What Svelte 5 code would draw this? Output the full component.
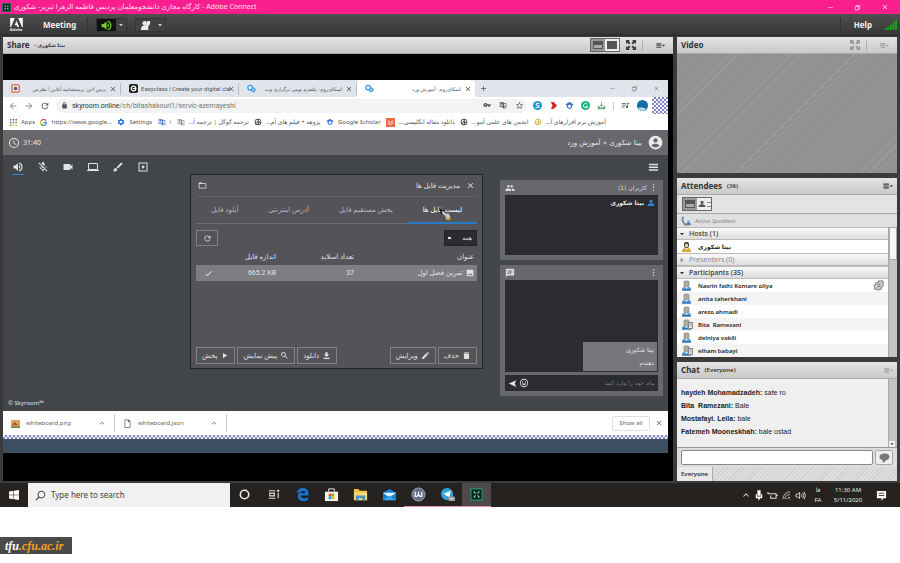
<script lang="ts">
  type Person = { name: string; badge?: boolean; hand?: boolean };

  // 24x24 single-colour glyphs
  const paths: { [name: string]: string } = {
    close: 'M19 6.4 17.6 5 12 10.6 6.4 5 5 6.4 10.6 12 5 17.6 6.4 19 12 13.4 17.6 19 19 17.6 13.4 12z',
    min: 'M4 11h16v2H4z',
    restore: 'M7 3h14v14h-4v4H3V7h4zm2 2v2h8v8h2V5zM5 9v10h10V9z',
    plus: 'M19 13h-6v6h-2v-6H5v-2h6V5h2v6h6z',
    back: 'M20 11H7.8l5.6-5.6L12 4l-8 8 8 8 1.4-1.4L7.8 13H20z',
    forward: 'M12 4l-1.4 1.4 5.6 5.6H4v2h12.2l-5.6 5.6L12 20l8-8z',
    refresh: 'M17.6 6.4A8 8 0 1 0 19.7 14h-2.1A6 6 0 1 1 12 6c1.7 0 3.1.7 4.2 1.8L13 11h7V4z',
    lock: 'M18 8h-1V6A5 5 0 0 0 7 6v2H6a2 2 0 0 0-2 2v10c0 1.1.9 2 2 2h12a2 2 0 0 0 2-2V10a2 2 0 0 0-2-2zM9 6a3 3 0 0 1 6 0v2H9z',
    key: 'M12.6 10A6 6 0 1 0 12.6 14H16v4h4v-4h3v-4zM7 14a2 2 0 1 1 0-4 2 2 0 0 1 0 4z',
    star: 'M22 9.2l-7.2-.6L12 2 9.2 8.6 2 9.2l5.5 4.7L5.8 21 12 17.3 18.2 21l-1.6-7.1zM12 15.4l-3.8 2.3 1-4.3-3.3-2.9 4.4-.4L12 6.1l1.7 4 4.4.4-3.3 2.9 1 4.3z',
    gear: 'M19.4 13a7.500 7.500 0 0 0 0-2l2.300-1.700-2.200-3.800-2.600 1a7 7 0 0 0-1.700-1L14.800 2h-5.600l-.4 3.500a7 7 0 0 0-1.700 1l-2.600-1-2.200 3.800L4.600 11a7.500 7.500 0 0 0 0 2l-2.300 1.700 2.200 3.800 2.600-1c.5.4 1.100.8 1.700 1l.4 3.500h5.600l.4-3.500c.6-.2 1.200-.6 1.700-1l2.600 1 2.200-3.800zM12 16a4 4 0 1 1 0-8 4 4 0 0 1 0 8z',
    translate: 'M2 3h11l1 4h8v15H11l-1-4H2zm2 2v11h8L9.500 5zm10.600 4 2.900 9.500-3 2H20V9zM5 7h5v2H8v5H6V9H5z',
    globe: 'M12 2a10 10 0 1 0 0 20 10 10 0 0 0 0-20zM5 8l4-3 3 1-1 3-3 1 1 3 3 1-1 5-3-2-1-4-3-3zm10-3 3 2 2 4-3 1-3-3zm1 9 3 1-3 4-2-1z',
    cap: 'M12 2 1 9l4 3v5l7 5 7-5v-5l4-3zM12 18a4 4 0 1 1 0-8 4 4 0 0 1 0 8z',
    clock: 'M12 2a10 10 0 1 0 0 20 10 10 0 0 0 0-20zm0 18a8 8 0 1 1 0-16 8 8 0 0 1 0 16zm.5-13H11v6l5.200 3.200.8-1.300-4.500-2.700z',
    account: 'M12 1a11 11 0 1 0 0 22 11 11 0 0 0 0-22zm0 4a3.500 3.500 0 1 1 0 7 3.500 3.500 0 0 1 0-7zm0 15a8 8 0 0 1-6.500-3.300C6 14.800 10 14 12 14s6 .8 6.500 2.700A8 8 0 0 1 12 20z',
    volume: 'M3 9v6h4l5 5V4L7 9zm13.500 3A4.500 4.500 0 0 0 14 8v8a4.500 4.500 0 0 0 2.500-4zM14 3.200v2.100a7 7 0 0 1 0 13.400v2.100a9 9 0 0 0 0-17.600z',
    micoff: 'M19 11h-1.700c0 .7-.2 1.400-.4 2l1.200 1.300c.6-1 .9-2.100.9-3.300zm-4 .2V5a3 3 0 0 0-6 0v.2zM4.300 3 3 4.300l6 6V11a3 3 0 0 0 3.700 2.900l1.600 1.700A5.300 5.300 0 0 1 6.700 11H5a7 7 0 0 0 6 6.700V21h2v-3.300c.9-.1 1.800-.4 2.500-.9l4.200 4.200 1.300-1.300z',
    camera: 'M17 10.500V7a1 1 0 0 0-1-1H4a1 1 0 0 0-1 1v10c0 .6.400 1 1 1h12a1 1 0 0 0 1-1v-3.500l4 4v-11z',
    laptop: 'M20 18a2 2 0 0 0 2-2V6a2 2 0 0 0-2-2H4a2 2 0 0 0-2 2v10c0 1.100.9 2 2 2H0v2h24v-2zM4 6h16v10H4z',
    brush: 'M7 14a3 3 0 0 0-3 3c0 1.300-1.200 2-2 2 .9 1.200 2.500 2 4 2a4 4 0 0 0 4-4 3 3 0 0 0-3-3zM20.700 4.600l-1.300-1.300a1 1 0 0 0-1.400 0L9 12.300l2.700 2.700 9-9a1 1 0 0 0 0-1.400z',
    play: 'M8 5v14l11-7z',
    playbox: 'M3 3h18v18H3zm2 2v14h14V5zm5 3 6 4-6 4z',
    menu: 'M2 19h20v-3H2zm0-6h20v-3H2zm0-9v3h20V4z',
    dots: 'M12 7a2 2 0 1 0 0-4 2 2 0 0 0 0 4zm0 3a2 2 0 1 0 0 4 2 2 0 0 0 0-4zm0 7a2 2 0 1 0 0 4 2 2 0 0 0 0-4z',
    group: 'M16 11a3 3 0 1 0 0-6 3 3 0 0 0 0 6zm-8 0a3 3 0 1 0 0-6 3 3 0 0 0 0 6zm0 2c-2.300 0-7 1.200-7 3.500V19h14v-2.500c0-2.300-4.700-3.500-7-3.500zm8 0h-1c1.200.8 2 2 2 3.500V19h6v-2.500c0-2.300-4.700-3.500-7-3.500z',
    person: 'M12 12a5 5 0 1 0 0-10 5 5 0 0 0 0 10zm0 1c-3 0-10 2-10 5v3h20v-3c0-3-7-5-10-5z',
    message: 'M20 2H4a2 2 0 0 0-2 2v18l4-4h14a2 2 0 0 0 2-2V4a2 2 0 0 0-2-2zM6 9h12v2H6zm8 5H6v-2h8zm4-6H6V6h12z',
    send: 'M22 3 2 12l20 9-4-9z',
    smile: 'M12 2a10 10 0 1 0 0 20 10 10 0 0 0 0-20zm0 18a8 8 0 1 1 0-16 8 8 0 0 1 0 16zM8.500 11a1.500 1.500 0 1 0 0-3 1.500 1.500 0 0 0 0 3zm7 0a1.500 1.500 0 1 0 0-3 1.500 1.500 0 0 0 0 3zM6.500 13a5.800 5.800 0 0 0 11 0z',
    folder: 'M20 6h-8l-2-2H4a2 2 0 0 0-2 2v12c0 1.100.9 2 2 2h16a2 2 0 0 0 2-2V8a2 2 0 0 0-2-2zm0 12H4V8h16z',
    check: 'M9 16.200 4.800 12l-1.400 1.400L9 19 21 7l-1.400-1.400z',
    image: 'M22 20V4a2 2 0 0 0-2-2H4a2 2 0 0 0-2 2v16c0 1.100.9 2 2 2h16a2 2 0 0 0 2-2zM8 13l3 4 4-5 5 7H4z',
    search: 'M15.500 14h-.8l-.3-.3a6.500 6.500 0 1 0-.7.7l.3.300v.8l5 5 1.500-1.500zm-6 0a4.500 4.500 0 1 1 0-9 4.500 4.500 0 0 1 0 9z',
    download: 'M19 9h-4V3H9v6H5l7 7zM4 18v3h16v-3z',
    pencil: 'M3 17.200V21h3.800L17.800 10l-3.800-3.800zM20.700 7a1 1 0 0 0 0-1.400l-2.300-2.300a1 1 0 0 0-1.400 0l-1.800 1.800L19 8.900z',
    trash: 'M5 19c0 1.100.9 2 2 2h10a2 2 0 0 0 2-2V7H5zM19 4h-4l-1-1h-4L9 4H5v2h14z',
    up: 'M12 8l-7 7 1.400 1.400L12 10.800l5.600 5.600L19 15z',
    down: 'M6 9h12l-6 7z',
    right: 'M8 5v14l9-7z',
    expand: 'M2 2h8L7.500 4.500 11 8 8 11 4.500 7.500 2 10zm12 0h8v8l-2.500-2.500L16 11l-3-3 3.500-3.500zM8 13l3 3-3.500 3.500L10 22H2v-8l2.500 2.500zm8 0 3.500 3.500L22 14v8h-8l2.500-2.500L13 16z',
    list: 'M1 6h13v3H1zm0 5h13v2H1zm0 4h13v3H1zM16 10h8l-4 5z',
    file: 'M4 1h11l5 5v17H4zm2 2v18h12V8h-5V3z',
    queue: 'M2 5h12v2H2zm0 5h12v2H2zm0 5h8v2H2zM17 5h5v3h-3v8a3 3 0 1 1-2-3z',
    inbox: 'M11 2h2v8h4l-5 5-5-5h4zM2 13h4l2 4h8l2-4h4v9H2z',
    speech: 'M12 3C5 3 1 6 1 11c0 4 3 6 7 7 1 2 0 4-2 5 5 0 8-2 9-5 5-1 8-4 8-8 0-5-5-7-11-7z'
  };

  const browserTabs = [
    { title: 'پرس لاین: پرسشنامه آنلاین | نظرس', icon: 'survey', fa: true, active: false },
    { title: 'Easyclass | Create your digital cla', icon: 'easy', fa: false, active: false },
    { title: 'اسکای‌روم - پلتفرم بومی برگزاری وب', icon: 'sky', fa: true, active: false },
    { title: 'اسکای‌روم - آموزش ورد', icon: 'sky', fa: true, active: true }
  ];

  const bookmarks = [
    { label: 'https://www.google...', icon: 'g', color: '#4285f4' },
    { label: 'Settings', icon: 'gear', color: '#1a73e8' },
    { label: 'i', icon: 'translate', color: '#4a7fd8' },
    { label: 'ترجمه گوگل | ترجمه آ...', icon: 'translate', color: '#8a8d91' },
    { label: 'پژوهه + فیلم های آم...', icon: 'globe', color: '#4b4d50' },
    { label: 'Google Scholar', icon: 'cap', color: '#4374d9' },
    { label: 'دانلود مقاله انگلیسی...', icon: 'mail', color: '#ee6a45' },
    { label: 'انجمن های علمی آمو...', icon: 'globe', color: '#4b4d50' },
    { label: 'آموزش نرم افزارهای آ...', icon: 'globe', color: '#e3b56c' }
  ];

  const tools = [
    { icon: 'volume', label: 'Speaker', on: true },
    { icon: 'micoff', label: 'Microphone', on: false },
    { icon: 'camera', label: 'Webcam', on: false },
    { icon: 'laptop', label: 'Screen', on: false },
    { icon: 'brush', label: 'Whiteboard', on: false },
    { icon: 'playbox', label: 'Player', on: false }
  ];

  const fileTabs = ['لیست فایل ها', 'پخش مستقیم فایل', 'آدرس اینترنتی', 'آپلود فایل'];
  let fileTab = $state(0);

  const participants: Person[] = [
    { name: 'Nasrin fathi Komare oliya', hand: true },
    { name: 'anita taherkhani' },
    { name: 'arezo ahmadi' },
    { name: 'Bita  Ramezani', badge: true },
    { name: 'delniya vakili' },
    { name: 'elham babayi', badge: true }
  ];

  const messages = [
    { from: 'haydeh Mohamadzadeh', text: 'safe ro' },
    { from: 'Bita  Ramezani', text: 'Bale' },
    { from: 'Mostafayi. Leila', text: 'bale' },
    { from: 'Fatemeh Mooneskhah', text: 'bale ostad' }
  ];

  const taskApps = ['cortana', 'tasks', 'edge', 'store', 'explorer', 'mail', 'wapp', 'telegram', 'connect'];
</script>

{#snippet icon(name: string, size: number)}
  <svg class="icon" viewBox="0 0 24 24" width={size} height={size} aria-hidden="true"><path d={paths[name]} /></svg>
{/snippet}

{#snippet avatar(host: boolean, badge: boolean)}
  <svg class="icon" viewBox="0 0 12 12" width="12" height="12" aria-hidden="true">
    {#if host}
      <rect x="3" y="1" width="5" height="6" rx="2" fill="#4b4334" />
      <rect x="4" y="3" width="3" height="3" fill="#e2cda2" />
      <path d="M1 11V9l2-2h5l2 2v2z" fill="#d9ab3c" />
    {:else}
      <rect x="3" y="1" width="5" height="6" rx="1" fill="#b3ac95" stroke="#7f8791" stroke-width=".7" />
      <path d="M1 11V8l2-1h5l2 1v3z" fill="#5c97d2" />
      <path d="M2 9.500h7" stroke="#3c73ad" />
    {/if}
    <path d="M4 7h3l-1.500 2z" fill="#e8eef5" />
    {#if badge}
      <rect x="7.500" y="3.500" width="4" height="6" fill="#eee" stroke="#888" />
      <path d="M8 5h3M8 7h3" stroke="#888" stroke-width=".7" />
    {/if}
  </svg>
{/snippet}

{#snippet appIcon(name: string)}
  <svg viewBox="0 0 16 16" width="15" height="15" aria-hidden="true">
    {#if name === 'cortana'}
      <circle cx="8" cy="8" r="4.500" fill="none" stroke="#eee" stroke-width="1.700" />
    {:else if name === 'tasks'}
      <path d="M3 4h7M3 12h7M4 6.500h5v3H4zM13 6v6" fill="none" stroke="#ddd" stroke-width="1.200" />
      <path d="M12 3h2v2h-2z" fill="#fff" />
    {:else if name === 'edge'}
      <path d="M1.500 7C2.200 3 5 1 8.300 1c4 0 6.200 2.800 6.200 6v2H6c.1 2 1.700 3 4 3 1.500 0 2.800-.4 4-1.100v3c-1.300.8-3 1.100-4.700 1.100C5.300 15 3 12.700 3 9.500 3 7.500 4 6 5.500 5 3.800 5.300 2.500 6 1.500 7zM6 6.600h5C11 5 10 4.100 8.600 4.100 7.200 4.100 6.200 5.200 6 6.600z" fill="#1673d6" />
    {:else if name === 'store'}
      <path d="M1 5h14v10H1z" fill="#f5f5f5" />
      <path d="M5 5V2h6v3" fill="none" stroke="#eee" />
      <path d="M5 7h3v3H5z" fill="#f25022" /><path d="M8 7h3v3H8z" fill="#7fba00" />
      <path d="M5 10h3v3H5z" fill="#00a4ef" /><path d="M8 10h3v3H8z" fill="#ffb900" />
    {:else if name === 'explorer'}
      <path d="M1 2h5l1 2h8v10H1z" fill="#f3c04c" />
      <path d="M1 6h14v8H1z" fill="#fad87c" />
      <path d="M3 9h10v5h-3v-2H6v2H3z" fill="#4296cf" />
    {:else if name === 'mail'}
      <path d="M1 6l7-4 7 4v8H1z" fill="#1683d8" />
      <path d="M1 6h14l-7 5z" fill="#e8f4fd" />
      <path d="M1 14l7-5 7 5z" fill="#3ba4ec" />
    {:else if name === 'wapp'}
      <circle cx="8" cy="8" r="7" fill="#66708a" stroke="#9ba3b6" />
      <path d="M4.500 5v5h2l1.500-2 1.500 2h2V5M8 5v3" fill="none" stroke="#fff" stroke-width="1.300" />
    {:else if name === 'telegram'}
      <circle cx="7.500" cy="7.500" r="6.500" fill="#2fa3dc" />
      <path d="M3 7.500l8.500-3.500-1.500 7-2.500-2-1 1.500-.5-2.500z" fill="#fff" />
      <rect x="9" y="10" width="7" height="5" rx="1" fill="#9d9d9d" />
      <path d="M10.500 12.500h4" stroke="#eee" />
    {:else}
      <path d="M2 2h12v12H2z" fill="#06261f" stroke="#2c8f72" stroke-width="1.200" />
      <path d="M5 5l2 2M11 5L9 7M5 11l2-2M11 11L9 9M5 5h1M11 5h-1M5 11h1M11 11h-1" stroke="#7fd6b5" stroke-width="1.300" />
    {/if}
  </svg>
{/snippet}

{#snippet tabIcon(name: string)}
  <svg class="icon" viewBox="0 0 10 10" width="9" height="9" aria-hidden="true">
    {#if name === 'survey'}
      <rect x="1" y="1" width="8" height="8" rx="1" fill="#fff" stroke="#e0643b" stroke-width="1.500" />
      <circle cx="5" cy="5" r="2.200" fill="#4b6a8b" />
    {:else if name === 'easy'}
      <rect width="10" height="10" rx="2" fill="#222" />
      <circle cx="5" cy="5" r="2.600" fill="none" stroke="#fff" stroke-width="1.300" />
      <path d="M4 5h4" stroke="#fff" />
    {:else}
      <circle cx="3.500" cy="4" r="2.600" fill="#fff" stroke="#3794e3" stroke-width="1.400" />
      <circle cx="7" cy="6.500" r="2.200" fill="#8bc6f4" stroke="#3794e3" />
    {/if}
  </svg>
{/snippet}

<div class="desktop">
  <header class="titlebar">
    <span class="app-mark">{@render icon('expand', 5)}</span>
    <span class="window-title">کارگاه مجازی دانشجومعلمان پردیس فاطمه الزهرا تبریز- شکوری - Adobe Connect</span>
    <div class="window-buttons">
      <button aria-label="Minimize">{@render icon('min', 7)}</button>
      <button aria-label="Restore">{@render icon('restore', 7)}</button>
      <button aria-label="Close">{@render icon('close', 8)}</button>
    </div>
  </header>

  <nav class="menubar">
    <span class="adobe">
      <svg viewBox="0 0 14 10" width="13" height="9" aria-hidden="true">
        <path d="M0 0h5L1 10H0zM9 0h5v10h-1zM7 3l3 7H8L7 8H5z" fill="#fff" />
      </svg>
      <small>Adobe</small>
    </span>
    <button class="menu-item">Meeting</button>
    <span class="menu-line"></span>
    <div class="toggle">
      <button class="speaker" aria-label="Speakers">{@render icon('volume', 13)}</button>
      <button class="caret" aria-label="Speaker options">{@render icon('down', 8)}</button>
    </div>
    <div class="toggle">
      <button class="raise" aria-label="Raise hand">
        <svg class="icon" viewBox="0 0 12 12" width="11" height="11" aria-hidden="true">
          <circle cx="5" cy="3.500" r="2.300" /><path d="M1 11c0-3 1-5 4-5l2-1V2l2-1h2v3L9 7v4z" />
        </svg>
      </button>
      <button class="caret" aria-label="Status options">{@render icon('down', 8)}</button>
    </div>
    <span class="menu-line push"></span>
    <button class="menu-item help">Help</button>
    <svg viewBox="0 0 12 10" width="12" height="10" aria-hidden="true">
      <path d="M0 8h2v2H0zM2.500 6.500h2V10h-2zM5 4.500h2V10H5zM7.500 2.500h2V10h-2zM10 0h2v10h-2z" fill="#14a01c" />
    </svg>
  </nav>

  <main class="room">
    <section class="pod share">
      <header class="pod-head">
        <h2>Share</h2>
        <span class="presenter">- بیتا شکوری</span>
        <div class="view-switch">
          <button class="on" aria-label="Split view"><span class="pane"></span></button>
          <button aria-label="Full view"><span class="pane solid"></span></button>
        </div>
        <button class="pod-btn" aria-label="Full screen">{@render icon('expand', 12)}</button>
        <span class="head-line"></span>
        <button class="pod-btn options" aria-label="Share options">{@render icon('list', 9)}</button>
      </header>

      <div class="stage">
        <div class="browser">
          <div class="tab-strip">
            {#each browserTabs as tab}
              <div class="tab" class:active={tab.active}>
                {@render tabIcon(tab.icon)}
                <span class="tab-title" class:persian={tab.fa} dir="auto">{tab.title}</span>
                <button aria-label="Close tab">{@render icon('close', 8)}</button>
              </div>
            {/each}
            <button class="new-tab" aria-label="New tab">{@render icon('plus', 9)}</button>
            <div class="strip-buttons">
              {@render icon('min', 7)}
              {@render icon('restore', 7)}
              {@render icon('close', 7)}
            </div>
          </div>

          <div class="address-row">
            <button class="dim" aria-label="Back">{@render icon('back', 10)}</button>
            <button class="dim" aria-label="Forward">{@render icon('forward', 10)}</button>
            <button aria-label="Reload">{@render icon('refresh', 10)}</button>
            <div class="address">
              {@render icon('lock', 7)}
              <span class="url">skyroom.online<i>/ch/bitashakouri1/servic-azemayeshi</i></span>
              <span class="address-icons">
                {@render icon('key', 8)}
                {@render icon('translate', 8)}
                {@render icon('star', 9)}
              </span>
            </div>
            <div class="extensions">
              <svg viewBox="0 0 10 10" width="9" height="9" aria-hidden="true"><circle cx="5" cy="5" r="5" fill="#1a97d4" /><path d="M7 3C5 2 3.300 3 3.500 4c.3 1.200 3.300.7 3.300 2C6.800 7.500 4.500 7.500 3 6.500" fill="none" stroke="#fff" stroke-width="1.200" /></svg>
              <svg viewBox="0 0 10 10" width="9" height="9" aria-hidden="true"><path d="M2 1h3l4 4-4 4H2l2-4z" fill="#d8221f" /></svg>
              <span class="blue">{@render icon('cap', 9)}</span>
              <svg viewBox="0 0 10 10" width="9" height="9" aria-hidden="true"><circle cx="5" cy="5" r="5" fill="#15b57b" /><path d="M7 3.500A2.500 2.500 0 1 0 7.500 6H5" fill="none" stroke="#fff" stroke-width="1.100" /></svg>
              <span class="green">{@render icon('inbox', 9)}</span>
              <span class="ext-line"></span>
              {@render icon('queue', 9)}
              <svg viewBox="0 0 12 12" width="11" height="11" aria-hidden="true"><circle cx="6" cy="6" r="6" fill="#146fa8" /><path d="M1 9c2-1.500 5-1 9 .5A6 6 0 0 1 6 12 6 6 0 0 1 1 9z" fill="#b6dbee" /></svg>
            </div>
            <span class="grain"></span>
          </div>

          <nav class="bookmarks">
            <a href="#apps">
              <svg viewBox="0 0 9 9" width="7" height="7" aria-hidden="true">
                <path d="M0 0h2v2H0zM3.500 3.500h2v2h-2z" fill="#4285f4" /><path d="M3.500 0h2v2h-2zM0 3.500h2v2H0zM7 0h2v2H7z" fill="#ea4335" />
                <path d="M7 3.500h2v2H7zM0 7h2v2H0z" fill="#34a853" /><path d="M3.500 7h2v2h-2zM7 7h2v2H7z" fill="#fbbc05" />
              </svg>
              <span>Apps</span>
            </a>
            {#each bookmarks as mark}
              <a href="#bookmark">
                {#if mark.icon === 'g'}
                  <svg viewBox="0 0 10 10" width="7" height="7" aria-hidden="true">
                    <path d="M8.500 2.500A4 4 0 0 0 1.500 3" fill="none" stroke="#ea4335" stroke-width="1.800" />
                    <path d="M1.500 3a4 4 0 0 0 0 4" fill="none" stroke="#fbbc05" stroke-width="1.800" />
                    <path d="M1.500 7A4 4 0 0 0 8 8" fill="none" stroke="#34a853" stroke-width="1.800" />
                    <path d="M8 8a4 4 0 0 0 1-3H5" fill="none" stroke="#4285f4" stroke-width="1.800" />
                  </svg>
                {:else if mark.icon === 'mail'}
                  <svg viewBox="0 0 10 10" width="9" height="9" aria-hidden="true"><path d="M0 0h10v10H0z" fill={mark.color} /><path d="M2 3l3 2 3-2M2 5.500l3 2 3-2" fill="none" stroke="#fff" /></svg>
                {:else}
                  <svg viewBox="0 0 24 24" width="8" height="8" aria-hidden="true"><path d={paths[mark.icon]} fill={mark.color} /></svg>
                {/if}
                <span dir="auto">{mark.label}</span>
              </a>
            {/each}
          </nav>

          <div class="sky-head">
            {@render icon('clock', 12)}
            <time>31:40</time>
            <span class="sky-title" dir="rtl">بیتا شکوری » آموزش ورد</span>
            {@render icon('account', 15)}
          </div>

          <div class="sky-body">
            <div class="sky-left">
              <div class="tools">
                {#each tools as tool}
                  <button class:on={tool.on} aria-label={tool.label}>{@render icon(tool.icon, 12)}</button>
                {/each}
              </div>
              <footer>© Skyroom™</footer>
            </div>

            <section class="files" dir="rtl">
              <header>
                <button aria-label="Close files">{@render icon('close', 9)}</button>
                <h3>مدیریت فایل ها</h3>
                {@render icon('folder', 9)}
              </header>
              <div class="file-tabs">
                {#each fileTabs as label, i}
                  <button class:active={fileTab === i} onclick={() => (fileTab = i)}>{label}</button>
                {/each}
                <svg class="pointer" viewBox="0 0 16 16" width="14" height="14" aria-hidden="true">
                  <path d="M1 1l7 3-3 1-1 4z" fill="#222" /><path d="M5 4l5 5-2 1-3-3z" fill="#ddd" />
                  <path d="M8 8l4-1 2 4v2H9z" fill="#c7cbd0" /><path d="M9 12h5v3H9z" fill="#cf9f4b" />
                </svg>
              </div>
              <div class="filter-row">
                <select aria-label="نوع فایل">
                  <option>همه</option>
                </select>
                <button class="outlined" aria-label="Refresh">{@render icon('refresh', 9)}</button>
              </div>
              <table>
                <thead>
                  <tr><th class="name">عنوان</th><th class="slides">تعداد اسلاید</th><th>اندازه فایل</th><th class="tick"></th></tr>
                </thead>
                <tbody>
                  <tr>
                    <td><span class="file-name">{@render icon('image', 8)} تمرین فصل اول</span></td>
                    <td>37</td>
                    <td dir="ltr">665.2 KB</td>
                    <td>{@render icon('check', 9)}</td>
                  </tr>
                </tbody>
              </table>
              <div class="actions">
                <button class="outlined">{@render icon('trash', 9)} حذف</button>
                <button class="outlined">{@render icon('pencil', 9)} ویرایش</button>
                <button class="outlined split">{@render icon('download', 9)} دانلود</button>
                <button class="outlined">{@render icon('search', 9)} پیش نمایش</button>
                <button class="outlined">{@render icon('play', 9)} پخش</button>
              </div>
            </section>

            <aside class="sky-side" dir="rtl">
              <button class="burger" aria-label="Menu">{@render icon('menu', 11)}</button>
              <section class="card users">
                <header>
                  {@render icon('dots', 9)}
                  <h3>کاربران (1)</h3>
                  {@render icon('group', 10)}
                </header>
                <div class="well">
                  <p class="user">{@render icon('person', 8)} بیتا شکوری</p>
                </div>
              </section>
              <section class="card talk">
                <header>
                  {@render icon('dots', 9)}
                  <span class="spacer"></span>
                  {@render icon('message', 10)}
                </header>
                <div class="well">
                  <div class="bubble">
                    <span>بیتا شکوری</span>
                    <span>دهندم</span>
                  </div>
                </div>
                <div class="composer">
                  <input type="text" aria-label="پیام" placeholder="پیام خود را وارد کنید" />
                  <button aria-label="Emoji">{@render icon('smile', 10)}</button>
                  <button aria-label="Send">{@render icon('send', 9)}</button>
                </div>
              </section>
            </aside>
          </div>

          <div class="downloads">
            <div class="download">
              <svg viewBox="0 0 10 10" width="9" height="9" aria-hidden="true"><path d="M0 1h10v8H0z" fill="#d8a763" /><path d="M1 7l3-4 4 4z" fill="#c3452f" /><path d="M0 8h10v2H0z" fill="#6d8c58" /></svg>
              <span>whiteboard.png</span>
              {@render icon('up', 8)}
            </div>
            <div class="download">
              {@render icon('file', 9)}
              <span>whiteboard.json</span>
              {@render icon('up', 8)}
            </div>
            <button class="show-all">Show all</button>
            <button aria-label="Close downloads">{@render icon('close', 8)}</button>
          </div>
          <div class="grain-strip"></div>
          <div class="inner-taskbar"></div>
        </div>
      </div>
    </section>

    <div class="side">
      <section class="pod video">
        <header class="pod-head">
          <h2>Video</h2>
          <button class="pod-btn dim push" aria-label="Full screen video">{@render icon('expand', 12)}</button>
          <span class="head-line"></span>
          <button class="pod-btn dim options" aria-label="Video options">{@render icon('list', 9)}</button>
        </header>
        <div class="video-area"></div>
      </section>

      <section class="pod attendees">
        <header class="pod-head">
          <h2>Attendees</h2>
          <span class="count">(36)</span>
          <button class="pod-btn push" aria-label="Attendee options">{@render icon('list', 10)}</button>
        </header>
        <div class="attendee-tools">
          <div class="view-switch">
            <button class="on" aria-label="List view"><span class="pane"></span></button>
            <button aria-label="Status view">{@render icon('person', 8)}<span class="lines"></span></button>
          </div>
        </div>
        <div class="speakers">
          <svg viewBox="0 0 12 12" width="10" height="10" aria-hidden="true">
            <path d="M3 1C0 4 3 10 7 11" fill="none" stroke="#6e7f92" stroke-width="2" /><circle cx="9" cy="7" r="1.800" fill="#7ba1c6" /><path d="M6 11l1-3h4l1 3z" fill="#557fa9" />
          </svg>
          Active Speakers
        </div>
        <div class="roster">
          <div class="people">
            <div class="role">{@render icon('down', 8)} Hosts (1)</div>
            <div class="person">{@render avatar(true, false)} <span>بیتا شکوری</span></div>
            <div class="role empty">{@render icon('right', 8)} Presenters (0)</div>
            <div class="role">{@render icon('down', 8)} Participants (35)</div>
            {#each participants as person, i}
              <div class="person" class:alt={i % 2 === 1}>
                {@render avatar(false, !!person.badge)}
                <span>{person.name}</span>
                {#if person.hand}
                  <svg class="raised" viewBox="0 0 12 12" width="11" height="11" aria-hidden="true">
                    <path d="M1 6l2-1V3h3V1h5v6l-2 1v2l-3 1-4-1z" fill="#c9c9c9" stroke="#777" />
                    <path d="M5 5h3M5 7h3" stroke="#777" />
                  </svg>
                {/if}
              </div>
            {/each}
          </div>
          <div class="scrollbar"><span class="thumb"></span></div>
        </div>
      </section>

      <section class="pod chat">
        <header class="pod-head">
          <h2>Chat</h2>
          <span class="count">(Everyone)</span>
          <button class="pod-btn dim push" aria-label="Chat options">{@render icon('list', 9)}</button>
        </header>
        <div class="log">
          <div class="messages">
            {#each messages as message}
              <p><b>{message.from}:</b> {message.text}</p>
            {/each}
          </div>
          <div class="scrollbar end"><span class="arrow">{@render icon('down', 6)}</span></div>
        </div>
        <form class="chat-form" onsubmit={(e) => e.preventDefault()}>
          <input type="text" aria-label="Chat message" />
          <button aria-label="Send message">{@render icon('speech', 11)}</button>
        </form>
        <div class="chat-tabs"><button>Everyone</button></div>
      </section>
    </div>
  </main>

  <footer class="taskbar">
    <button class="start" aria-label="Start">
      <svg viewBox="0 0 10 10" width="10" height="10" aria-hidden="true"><path d="M0 1.500l4.500-.7v4H0zM5 .7 10 0v4.800H5zM0 5.300h4.500v4L0 8.600zM5 5.300h5V10l-5-.7z" fill="#fff" /></svg>
    </button>
    <label class="search">
      <svg viewBox="0 0 12 12" width="11" height="11" aria-hidden="true"><circle cx="7" cy="5" r="3.700" fill="none" stroke="#333" /><path d="M4.300 7.700 1 11" stroke="#333" stroke-width="1.200" /></svg>
      <input type="text" aria-label="Search" placeholder="Type here to search" />
    </label>
    {#each taskApps as app, i}
      <button class="app" class:running={i > 5} class:current={app === 'connect'} aria-label={app}>{@render appIcon(app)}</button>
    {/each}
    <div class="tray">
      {@render icon('up', 10)}
      <svg viewBox="0 0 10 12" width="8" height="10" aria-hidden="true"><path d="M3 0h4v7H3zM1 5h1.500v3h5V5H9v5H6v2H4v-2H1z" fill="#fff" /></svg>
      <svg viewBox="0 0 12 10" width="11" height="9" aria-hidden="true"><path d="M3 3h7v5H4V5M1 1v2h3M10 5h2" fill="none" stroke="#ddd" stroke-width="1.200" /></svg>
      <svg viewBox="0 0 10 10" width="9" height="9" aria-hidden="true"><path d="M1 9a8 8 0 0 1 8-8M3 9a6 6 0 0 1 6-5M5 9a4 4 0 0 1 4-2M8 9h1" fill="none" stroke="#ccc" /></svg>
      <svg viewBox="0 0 12 10" width="11" height="9" aria-hidden="true"><path d="M1 3.500h2L5 1.500v7l-2-2H1zM7 3.500a3 3 0 0 1 0 3M8.500 2a5 5 0 0 1 0 6M10 .8a7 7 0 0 1 0 8.400" fill="none" stroke="#ddd" /></svg>
      <span class="lang"><span>فا</span><span>FA</span></span>
      <span class="clock"><span>11:30 AM</span><span>5/11/2020</span></span>
      <svg viewBox="0 0 12 12" width="11" height="11" aria-hidden="true"><path d="M1 1h10v8H8l-2 3V9H1z" fill="#fff" /><path d="M3 3.500h6M3 6h6" stroke="#333" /></svg>
    </div>
  </footer>

  <a class="watermark" href="#site"><span>tfu</span>.cfu.ac.ir</a>
</div>

<style>
  :global(body) {
    background: #fff;
  }

  .desktop {
    font-family: "Noto Sans", "DejaVu Sans", sans-serif;
    font-size: 7px;
    line-height: 10px;
    color: #333;
  }

  .desktop :global(*) {
    box-sizing: border-box;
  }

  button {
    display: flex;
    align-items: center;
    justify-content: center;
    gap: 3px;
    margin: 0;
    padding: 0;
    border: none;
    background: none;
    color: inherit;
    font: inherit;
    cursor: pointer;
  }

  input,
  select {
    min-width: 0;
    margin: 0;
    font: inherit;
    color: inherit;
    outline: none;
  }

  h2,
  h3,
  p {
    margin: 0;
    font-size: inherit;
  }

  svg {
    display: block;
    flex: none;
  }

  .icon {
    fill: currentColor;
  }

  .push {
    margin-left: auto;
  }

  /* window frame */
  .titlebar {
    display: flex;
    align-items: center;
    gap: 3px;
    height: 14px;
    padding: 0 11px 0 2px;
    background: #fa1e8f;
    color: #fde3f1;
  }

  .app-mark {
    padding: 1px;
    border: 1px solid #256a58;
    background: #08261f;
    color: #77c7ab;
  }

  .window-title {
    white-space: nowrap;
  }

  .window-buttons {
    display: flex;
    gap: 20px;
    margin-left: auto;
  }

  .menubar {
    display: flex;
    align-items: center;
    height: 22px;
    padding: 0 3px 0 9px;
    background: linear-gradient(#4f4f4f, #393939 85%, #2b2b2b);
    color: #eee;
  }

  .adobe {
    display: flex;
    flex-direction: column;
    align-items: center;
    width: 14px;
  }

  .adobe small {
    font-size: 4px;
    font-weight: bold;
    line-height: 5px;
  }

  .menu-item {
    font-size: 8px;
    font-weight: bold;
    margin-left: 20px;
  }

  .menu-line {
    width: 1px;
    height: 14px;
    margin-left: 11px;
    background: #333;
  }

  .menu-line.push {
    margin-left: auto;
  }

  .menu-item.help {
    margin: 0 13px;
  }

  .toggle {
    display: flex;
    height: 14px;
    margin-left: 8px;
    border: 1px solid #353535;
    background: #424242;
  }

  .speaker {
    width: 19px;
    background: #111;
    color: #6fd32c;
  }

  .raise {
    width: 19px;
  }

  .caret {
    width: 10px;
    color: #ccc;
  }

  .room {
    display: grid;
    grid-template-columns: minmax(0, 1fr) 220px;
    gap: 4px;
    padding: 1px 3px 2px;
    background: #3b3b3b;
  }

  .pod-head {
    display: flex;
    align-items: center;
    gap: 5px;
    height: 17px;
    padding: 0 4px;
    border-bottom: 1px solid #aaa;
    background: linear-gradient(#e4e4e4, #c9c9c9);
    color: #333;
  }

  .pod-head h2 {
    font-size: 8px;
  }

  .pod-btn {
    color: #3d3d3d;
  }

  .pod-btn.dim {
    color: #999;
  }

  .options {
    margin: 0 4px 0 8px;
  }

  .head-line {
    width: 1px;
    height: 11px;
    background: #b2b2b2;
  }

  .view-switch {
    display: flex;
    width: max-content;
    border: 1px solid #666;
    background: #eee;
  }

  .view-switch button {
    width: 14px;
    height: 12px;
    gap: 1px;
    color: #555;
  }

  .view-switch .on {
    background: #999;
  }

  .pane {
    width: 10px;
    height: 8px;
    border: 1px solid #555;
    border-width: 4px 1px 1px;
    background: #aaa;
  }

  .pane.solid {
    background: #555;
  }

  .lines {
    width: 4px;
    height: 5px;
    border: 1px solid #888;
    border-width: 1px 0;
  }

  .share .view-switch {
    margin-left: auto;
  }

  .presenter {
    font-weight: bold;
    font-size: 5px;
  }

  .stage {
    padding: 26px 5px 28px 0;
    background: #000;
  }

  /* shared browser */
  .browser {
    background: #fff;
  }

  .tab-strip {
    display: flex;
    align-items: center;
    height: 17px;
    padding: 0 8px 0 0;
    background: #e1e4ea;
    color: #555;
  }

  .tab {
    display: flex;
    flex: 0 1 118px;
    align-items: center;
    gap: 3px;
    min-width: 0;
    height: 12px;
    padding: 0 3px 0 8px;
    border-right: 1px solid #b9bcc2;
    font-family: Roboto, "DejaVu Sans", sans-serif;
  }

  .tab.active {
    height: 17px;
    border: none;
    border-radius: 4px 4px 0 0;
    background: #fff;
  }

  .tab-title {
    flex: 1;
    min-width: 0;
    font-size: 6px;
    white-space: nowrap;
  }

  .tab-title.persian {
    font-size: 5px;
  }

  .new-tab {
    margin-left: 4px;
  }

  .strip-buttons {
    display: flex;
    gap: 15px;
    margin-left: auto;
    color: #888;
  }

  .address-row {
    display: flex;
    align-items: center;
    gap: 6px;
    height: 17px;
    padding-left: 5px;
    color: #555;
  }

  .dim {
    color: #8b8e92;
  }

  .address {
    display: flex;
    flex: 1;
    align-items: center;
    gap: 4px;
    min-width: 0;
    height: 14px;
    padding: 0 3px 0 5px;
    border-radius: 7px;
    background: #f1f3f4;
  }

  .url {
    font-family: Roboto, sans-serif;
    font-size: 7px;
    color: #333;
  }

  .url i {
    font-style: normal;
    color: #777;
  }

  .address-icons {
    display: flex;
    gap: 8px;
    margin-left: auto;
  }

  .extensions {
    display: flex;
    align-items: center;
    gap: 7px;
  }

  .blue {
    color: #4470d2;
  }

  .green {
    color: #69a877;
  }

  .ext-line {
    width: 1px;
    height: 8px;
    background: #ccc;
  }

  .grain,
  .grain-strip {
    background: repeating-conic-gradient(#8083bd 0 25%, #f4f4fb 0 50%) 0 0 / 4px 4px;
  }

  .grain {
    width: 16px;
    height: 17px;
    margin-left: -2px;
  }

  .grain-strip {
    height: 4px;
  }

  .bookmarks {
    display: flex;
    align-items: center;
    justify-content: space-between;
    height: 16px;
    padding: 0 62px 0 7px;
  }

  .bookmarks a {
    display: flex;
    align-items: center;
    gap: 4px;
    color: #555;
    font-size: 6px;
    text-decoration: none;
    white-space: nowrap;
  }

  /* skyroom */
  .sky-head {
    display: flex;
    align-items: center;
    gap: 3px;
    height: 25px;
    padding: 0 5px;
    background: #67676c;
    color: #ececec;
  }

  .sky-head time {
    font-size: 7px;
  }

  .sky-title {
    margin: 0 3px 0 auto;
    font-family: "DejaVu Sans", sans-serif;
  }

  .sky-body {
    display: grid;
    grid-template-columns: minmax(0, 1fr) 293px 163px;
    column-gap: 17px;
    height: 256px;
    padding-right: 5px;
    background: #424549;
    color: #e2e2e2;
  }

  .sky-left {
    display: flex;
    flex-direction: column;
    justify-content: space-between;
    margin-right: -17px;
    padding: 6px 0 3px 5px;
  }

  .sky-left footer {
    font-size: 6px;
  }

  .tools {
    display: flex;
    gap: 13px;
    padding-left: 4px;
  }

  .tools button {
    width: 12px;
    height: 14px;
    padding-bottom: 1px;
    border-bottom: 1px solid transparent;
  }

  .tools .on {
    border-color: #2b84d8;
  }

  .files {
    display: flex;
    flex-direction: column;
    height: 195px;
    margin-top: 19px;
    padding: 0 5px 4px;
    border: 1px solid #202225;
    background: #545358;
    font-family: Roboto, "DejaVu Sans", sans-serif;
  }

  .files header {
    display: flex;
    align-items: center;
    gap: 6px;
    height: 22px;
    padding: 0 2px;
    border-bottom: 1px solid #606065;
  }

  .files h3 {
    flex: 1;
    font-weight: normal;
  }

  .file-tabs {
    position: relative;
    display: flex;
    height: 27px;
    border-bottom: 1px solid #6b6b70;
    color: #b9b9bd;
  }

  .file-tabs button {
    flex: 1 1 auto;
    margin-bottom: -1px;
    border-bottom: 2px solid transparent;
  }

  .file-tabs .active {
    border-color: #2b7ac8;
    color: #fff;
  }

  .pointer {
    position: absolute;
    right: 25px;
    top: 10px;
  }

  .filter-row {
    display: flex;
    justify-content: space-between;
    padding: 6px 0 3px;
  }

  .filter-row select {
    appearance: none;
    width: 33px;
    height: 16px;
    padding: 0 4px;
    border: 1px solid #202226;
    border-radius: 0;
    background: linear-gradient(#ddd, #ddd) 3px 6px / 3px 2px no-repeat #2a2c31;
    font-size: 6px;
  }

  .outlined {
    height: 17px;
    padding: 0 5px;
    border: 1px solid #818186;
  }

  .filter-row .outlined {
    width: 22px;
    height: 16px;
  }

  table {
    width: 100%;
    border-collapse: collapse;
    table-layout: fixed;
    text-align: right;
  }

  th,
  td {
    height: 16px;
    padding: 0 3px;
    font-weight: normal;
    white-space: nowrap;
  }

  td {
    background: #7d7d82;
  }

  .name {
    width: 120px;
  }

  .slides {
    width: 78px;
  }

  .tick {
    width: 20px;
  }

  .file-name {
    display: flex;
    align-items: center;
    gap: 3px;
  }

  .actions {
    display: flex;
    gap: 2px;
    margin-top: auto;
  }

  .split {
    margin-right: auto;
  }

  .sky-side {
    display: flex;
    flex-direction: column;
    gap: 5px;
    font-family: "DejaVu Sans", sans-serif;
    font-size: 6px;
  }

  .burger {
    align-self: flex-start;
    height: 20px;
    margin: 0 4px;
    padding-top: 4px;
  }

  .card {
    display: flex;
    flex-direction: column;
    padding: 0 5px 5px;
    background: #67676c;
  }

  .card header {
    display: flex;
    align-items: center;
    height: 15px;
    color: #ddd;
  }

  .card h3,
  .spacer {
    flex: 1;
    padding-right: 2px;
    font-weight: normal;
  }

  .well {
    flex: 1;
    padding: 3px;
    background: #2a2c30;
  }

  .users {
    height: 80px;
  }

  .talk {
    height: 131px;
  }

  .user {
    display: flex;
    align-items: center;
    gap: 3px;
    color: #eee;
    font-weight: bold;
  }

  .user .icon,
  .user :global(svg) {
    color: #2b84d8;
  }

  .talk .well {
    display: flex;
    align-items: flex-end;
    padding: 1px;
  }

  .bubble {
    display: flex;
    flex-direction: column;
    gap: 3px;
    width: 74px;
    padding: 3px;
    background: #77767c;
  }

  .composer {
    display: flex;
    align-items: center;
    gap: 2px;
    height: 16px;
    margin-top: 3px;
    padding: 0 3px;
    background: #2a2c30;
  }

  .composer input {
    flex: 1;
    padding: 0;
    border: none;
    background: none;
  }

  .composer input::placeholder {
    color: #77797e;
    opacity: 1;
  }

  .downloads {
    display: flex;
    align-items: center;
    gap: 5px;
    height: 24px;
    padding-right: 5px;
    color: #666;
    font-size: 6px;
  }

  .download {
    display: flex;
    align-items: center;
    gap: 6px;
    width: 112px;
    height: 18px;
    margin-right: -5px;
    padding: 0 8px;
    border-right: 1px solid #ccc;
  }

  .download span {
    flex: 1;
  }

  .show-all {
    width: 38px;
    height: 15px;
    margin-left: auto;
    border: 1px solid #e0e0e0;
    border-radius: 2px;
  }

  .inner-taskbar {
    height: 14px;
    background: #3d5062;
  }

  /* right column */
  .side {
    display: flex;
    flex-direction: column;
    gap: 5px;
  }

  .video-area {
    height: 119px;
    background:
      repeating-linear-gradient(135deg, transparent 0 37px, #9c9c9c 37px 38px, transparent 38px 43px, #9b9b9b 43px 44px),
      repeating-linear-gradient(135deg, #8e8e8e 0 1px, #949494 1px 3px);
  }

  .attendee-tools {
    padding: 2px 5px;
    background: #e3e3e3;
    border-bottom: 1px solid #aaa;
  }

  .count {
    font-size: 6px;
    font-weight: 600;
  }

  .speakers {
    display: flex;
    align-items: center;
    gap: 4px;
    height: 13px;
    padding-left: 4px;
    background: #e0e0e0;
    color: #888;
    font-size: 6px;
    font-style: italic;
  }

  .roster,
  .log {
    display: flex;
  }

  .people,
  .messages {
    flex: 1;
    min-width: 0;
  }

  .role {
    display: flex;
    align-items: center;
    gap: 3px;
    height: 13px;
    padding-left: 1px;
    border: 1px solid #bbb;
    border-width: 1px 0;
    background: linear-gradient(#fafafa, #dcdcdc);
    font-weight: 500;
  }

  .role.empty {
    color: #8b8b8b;
    font-weight: normal;
  }

  .person {
    display: flex;
    align-items: center;
    gap: 5px;
    height: 13px;
    padding: 0 4px;
    background: #fff;
    color: #222;
    font-size: 6px;
    font-weight: 600;
    white-space: pre;
  }

  .person.alt {
    background: #f4f4f4;
  }

  .raised {
    margin-left: auto;
  }

  .scrollbar {
    width: 9px;
    border-left: 1px solid #aaa;
    background: #c3c3c3;
  }

  .thumb {
    display: block;
    height: 33px;
    border: 1px solid #aaa;
    background: #f6f6f6;
  }

  .chat {
    display: flex;
    flex: 1;
    flex-direction: column;
  }

  .log {
    flex: 1;
    background: #efefef;
  }

  .messages {
    padding: 7px 4px 0;
    color: #222;
    font-family: "Liberation Sans", Arial, sans-serif;
    line-height: 13px;
    white-space: pre;
  }

  .scrollbar.end {
    display: flex;
    align-items: flex-end;
  }

  .arrow {
    background: #eee;
  }

  .chat-form {
    display: flex;
    gap: 2px;
    padding: 2px 4px;
    border-top: 1px solid #999;
    background: #ddd;
  }

  .chat-form input {
    flex: 1;
    height: 15px;
    border: 1px solid #888;
    border-radius: 2px;
    background: #fff;
  }

  .chat-form button {
    width: 18px;
    border: 1px solid #aaa;
    border-radius: 2px;
    background: #eee;
    color: #777;
  }

  .chat-tabs {
    display: flex;
    height: 14px;
    background: repeating-linear-gradient(135deg, #cfcfcf 0 1px, #dedede 1px 3px);
  }

  .chat-tabs button {
    padding: 0 4px;
    border-right: 1px solid #aaa;
    background: #e9e9e9;
    font-size: 6px;
    font-weight: 600;
  }

  /* windows taskbar */
  .taskbar {
    display: flex;
    height: 24px;
    background: #26221f;
    color: #e8e8e8;
  }

  .start {
    width: 28px;
  }

  .search {
    display: flex;
    align-items: center;
    gap: 5px;
    width: 202px;
    padding-left: 7px;
    background: #f1f1f1;
  }

  .search input {
    flex: 1;
    padding: 0;
    border: none;
    background: none;
    font-size: 8px;
  }

  .search input::placeholder {
    color: #444;
    opacity: 1;
  }

  .app {
    width: 29px;
    border-bottom: 1px solid transparent;
  }

  .running {
    border-color: #f08cc0;
  }

  .current {
    background: #4e4a49;
  }

  .tray {
    display: flex;
    align-items: center;
    gap: 4px;
    margin-left: auto;
    padding-right: 13px;
    font-size: 6px;
  }

  .lang,
  .clock {
    display: flex;
    flex-direction: column;
    align-items: center;
    width: 16px;
  }

  .clock {
    width: 36px;
    margin-right: 6px;
  }

  .watermark {
    display: flex;
    align-items: center;
    width: 72px;
    height: 17px;
    margin-top: 30px;
    padding-left: 5px;
    background: #4a4a4a;
    color: #f5a01d;
    font-family: "Liberation Serif", serif;
    font-size: 12px;
    font-style: italic;
    font-weight: bold;
    text-decoration: none;
  }

  .watermark span {
    color: #fff;
  }
</style>
